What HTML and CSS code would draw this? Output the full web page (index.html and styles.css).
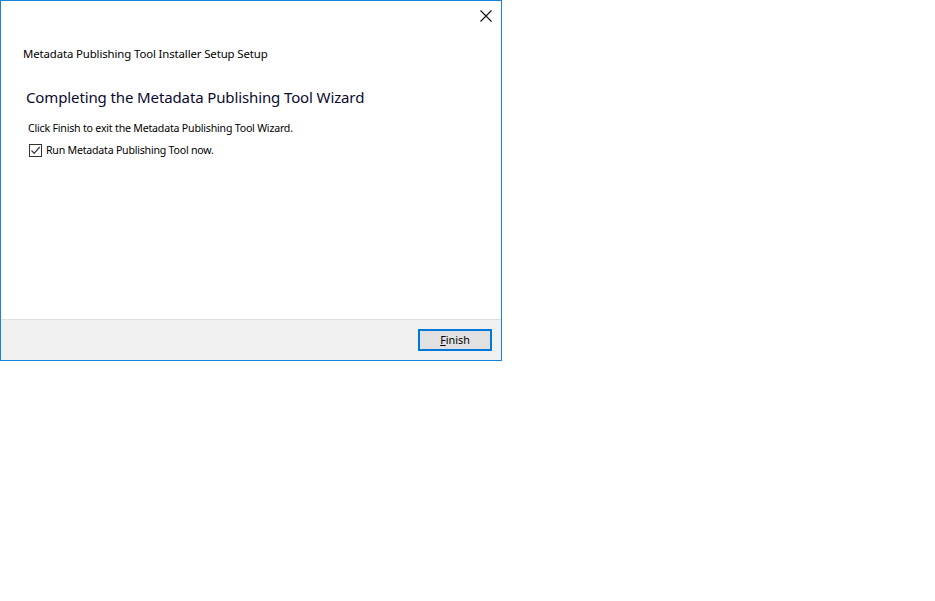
FILE: index.html
```html
<!DOCTYPE html>
<html>
<head>
<meta charset="utf-8">
<link rel="stylesheet" href="styles.css">
</head>
<body>
<div class="window">
  <div class="content">
    <div class="titlebar">
      <svg class="close" width="12" height="12" viewBox="0 0 12 12"><path d="M0.5 0.5 L11.5 11.5 M11.5 0.5 L0.5 11.5" stroke="#111" stroke-width="1.1" fill="none"/></svg>
    </div>
    <div class="apptitle">Metadata Publishing Tool Installer Setup Setup</div>
    <h1 class="heading">Completing the Metadata Publishing Tool Wizard</h1>
    <p class="text">Click Finish to exit the Metadata Publishing Tool Wizard.</p>
    <label class="check">
      <span class="box"><svg width="11" height="11" viewBox="0 0 11 11"><path d="M1.5 5.5 L4.2 8.3 L9.7 2" stroke="#333" stroke-width="1.2" fill="none"/></svg></span>
      <span>Run Metadata Publishing Tool now.</span>
    </label>
  </div>
  <div class="footer">
    <button class="btn"><u>F</u>inish</button>
  </div>
</div>
</body>
</html>
```
FILE: styles.css
```css
html, body {
  margin: 0;
  padding: 0;
  background: #ffffff;
}
body {
  font-family: "Noto Sans", "Open Sans", sans-serif;
  color: #000;
}
.window {
  width: 500px;
  height: 359px;
  border: 1px solid #1883d7;
  display: flex;
  flex-direction: column;
  background: #fff;
}
.content {
  flex: 1;
  display: flex;
  flex-direction: column;
}
.titlebar {
  height: 30px;
  display: flex;
  justify-content: flex-end;
  align-items: flex-start;
}
.close {
  margin-top: 9px;
  margin-right: 9px;
}
.apptitle {
  margin-left: 22px;
  margin-top: 15px;
  font-size: 11.4px;
  letter-spacing: -0.12px;
  line-height: 16px;
  color: #000;
}
.heading {
  margin: 25px 0 0 25px;
  font-weight: normal;
  font-size: 15px;
  letter-spacing: -0.12px;
  line-height: 20px;
  color: #0a0a30;
}
.text {
  margin: 14px 0 0 27px;
  font-size: 10.6px;
  letter-spacing: -0.2px;
  line-height: 15px;
}
.check {
  margin: 7px 0 0 28px;
  display: flex;
  align-items: center;
  gap: 4px;
  font-size: 10.6px;
  letter-spacing: -0.22px;
  line-height: 15px;
}
.box {
  width: 11px;
  height: 11px;
  border: 1px solid #333;
  display: flex;
  align-items: center;
  justify-content: center;
}
.footer {
  height: 40px;
  border-top: 1px solid #dfdfdf;
  background: #f0f0f0;
  display: flex;
  justify-content: flex-end;
  align-items: flex-start;
}
.btn {
  margin-top: 9px;
  margin-right: 9px;
  width: 74px;
  height: 22px;
  border: 2px solid #0078d7;
  background: #e1e1e1;
  font-family: "Noto Sans", "Open Sans", sans-serif;
  font-size: 10.8px;
  line-height: 16px;
  padding: 0;
  color: #000;
}
.btn u {
  text-decoration: underline;
}
```
